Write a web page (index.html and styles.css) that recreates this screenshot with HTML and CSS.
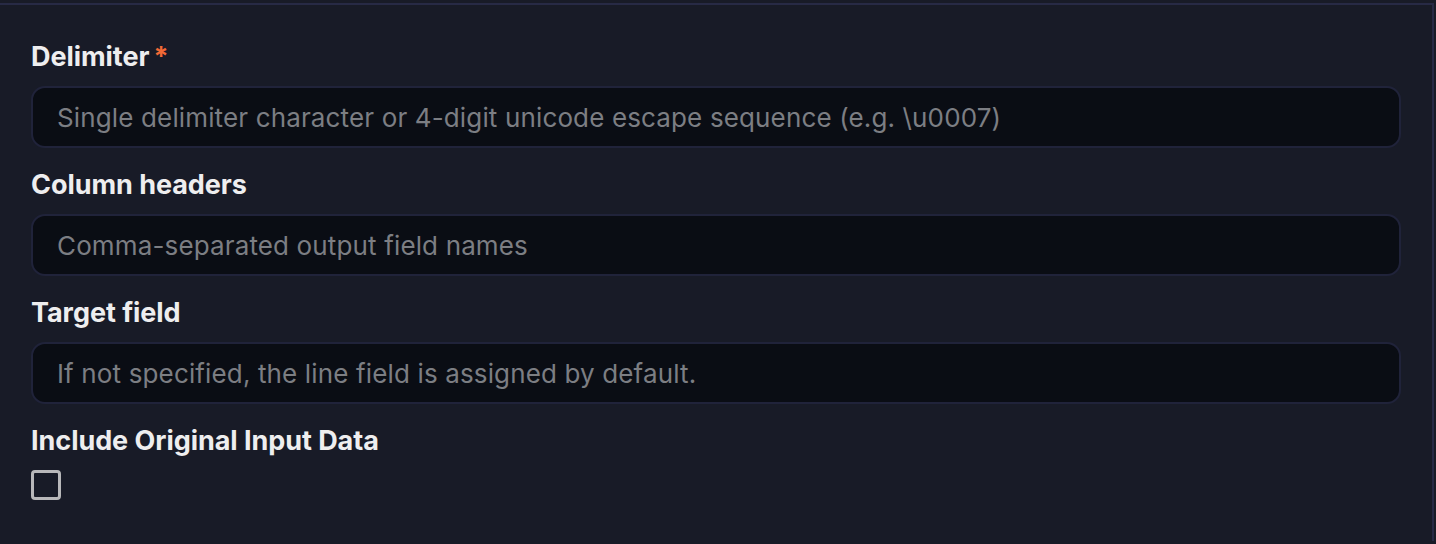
FILE: index.html
```html
<!DOCTYPE html>
<html lang="en">
<head>
<meta charset="utf-8">
<title>Processor settings</title>
<link rel="stylesheet" href="styles.css">
</head>
<body>
<div class="panel">
  <div class="field">
    <div class="label">Delimiter<span class="req">*</span></div>
    <div class="input" role="textbox"><span class="ph">Single delimiter character or 4-digit unicode escape sequence (e.g. \u0007)</span></div>
  </div>
  <div class="field">
    <div class="label">Column headers</div>
    <div class="input" role="textbox"><span class="ph">Comma-separated output field names</span></div>
  </div>
  <div class="field">
    <div class="label">Target field</div>
    <div class="input" role="textbox"><span class="ph">If not specified, the line field is assigned by default.</span></div>
  </div>
  <div class="field">
    <div class="label">Include Original Input Data</div>
    <div class="checkbox" role="checkbox" aria-checked="false"></div>
  </div>
</div>
</body>
</html>
```
FILE: styles.css
```css
html, body {
  margin: 0;
  padding: 0;
  background: #181b27;
  font-family: Inter, "Noto Sans", sans-serif;
}
.panel {
  margin-top: 3px;
  width: 1434px;
  height: 538px;
  box-sizing: border-box;
  border-top: 2px solid #272a45;
  border-right: 2px solid #272a45;
  padding: 34px 31px 0 31px;
  display: flex;
  flex-direction: column;
  gap: 19px;
}
.field {
  display: flex;
  flex-direction: column;
  gap: 11px;
}
.label {
  font-size: 27px;
  line-height: 36px;
  font-weight: 700;
  color: #eeeeef;
  letter-spacing: -0.05px;
}
.req {
  color: #f26a36;
  margin-left: 4px;
}
.input {
  height: 62px;
  box-sizing: border-box;
  border: 2px solid #20233a;
  border-radius: 14px;
  background: #0a0d14;
  padding: 0 24px;
  display: flex;
  align-items: center;
}
.ph {
  font-size: 26px;
  letter-spacing: 0.14px;
  color: #7c7e83;
}
.checkbox {
  width: 30px;
  height: 30px;
  box-sizing: border-box;
  border: 3px solid #b8b8ba;
  border-radius: 4px;
}
```
